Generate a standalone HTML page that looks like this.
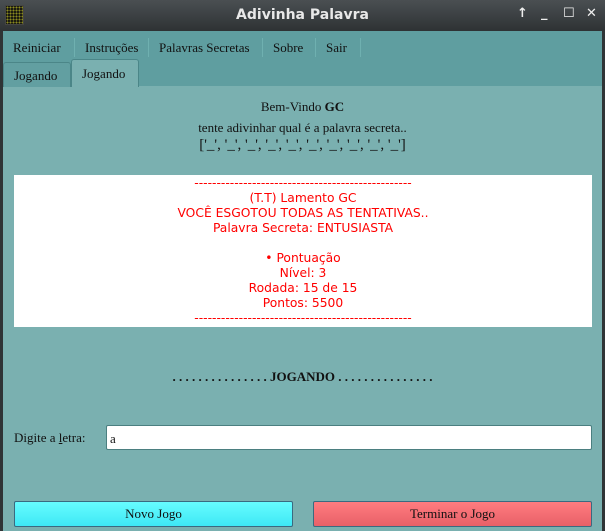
<!DOCTYPE html><html><head><style>
*{margin:0;padding:0;box-sizing:border-box}
body{width:605px;height:531px;overflow:hidden;background:#2f3436;position:relative;font-family:"Liberation Serif",serif;font-size:13px;color:#111}
.tb{position:absolute;left:0;top:0;width:605px;height:31px;background:linear-gradient(#4a4f52,#2e3234);}
.tb .t{position:absolute;left:0;right:0;top:7px;text-align:center;color:#e8e8e8;font:bold 14px "DejaVu Sans",sans-serif}
.icon{position:absolute;left:5px;top:5px;width:19px;height:20px;background:#1a1a10;border:1px solid #444;background-image:radial-gradient(#8a8a20 1px,transparent 1px);background-size:3px 3px}
.ctl{position:absolute;top:6px;color:#eee;font:bold 13px "DejaVu Sans",sans-serif}
.win{position:absolute;left:3px;top:31px;width:599px;height:500px;background:#7ab0b0}
.menu{position:absolute;left:0;top:0;width:599px;height:55px;background:#5f9ea0}
.mi{position:absolute;top:9px;font-size:13px}
.sep{position:absolute;top:7px;width:1px;height:19px;background:#6fb0b0}
.tab{position:absolute;top:30px;height:26px;border:1px solid #4b8688;border-bottom:none;border-radius:3px 3px 0 0;padding:5px 0 0 10px}
.c{text-align:center;position:absolute;left:0;width:599px}
.box{position:absolute;left:11px;top:144px;width:578px;height:152px;background:#fff;color:#f00;font-family:"DejaVu Sans",sans-serif;font-size:12.3px;text-align:center;line-height:15px;padding-top:1px}
.inp{position:absolute;left:103px;top:394px;width:486px;height:25px;background:#fff;border:1px solid #4b7f80;border-radius:2px;padding:5px 0 0 3px}
.btn{position:absolute;top:470px;width:279px;height:26px;border:1px solid #3a6a80;border-radius:2px;text-align:center;padding-top:4px}
</style></head><body>
<div class="tb"><div class="icon"></div><div class="t">Adivinha Palavra</div>
<span class="ctl" style="left:517px">↑</span><span class="ctl" style="left:541px">_</span><span class="ctl" style="left:563px">☐</span><span class="ctl" style="left:586px">✕</span></div>
<div class="win">
<div class="menu">
<span class="mi" style="left:10px">Reiniciar</span><div class="sep" style="left:71px"></div>
<span class="mi" style="left:82px">Instruções</span><div class="sep" style="left:145px"></div>
<span class="mi" style="left:156px">Palavras Secretas</span><div class="sep" style="left:259px"></div>
<span class="mi" style="left:270px">Sobre</span><div class="sep" style="left:312px"></div>
<span class="mi" style="left:323px">Sair</span><div class="sep" style="left:357px"></div>
<div class="tab" style="left:0;width:68px;top:31px;height:25px;background:#629fa1">Jogando</div>
<div class="tab" style="left:68px;width:68px;background:#7ab0b0;top:28px;height:28px;padding-top:6px">Jogando</div>
</div>
<div class="c" style="top:68px">Bem-Vindo <b>GC</b></div>
<div class="c" style="top:89px">tente adivinhar qual é a palavra secreta..</div>
<div class="c" style="top:106px;font-size:15px">['_', '_', '_', '_', '_', '_', '_', '_', '_', '_']</div>
<div class="box">-------------------------------------------------<br>(T.T) Lamento GC<br>VOCÊ ESGOTOU TODAS AS TENTATIVAS..<br>Palavra Secreta: ENTUSIASTA<br><br>• Pontuação<br>Nível: 3<br>Rodada: 15 de 15<br>Pontos: 5500<br>-------------------------------------------------</div>
<div class="c" style="top:338px;font-weight:bold">. . . . . . . . . . . . . . . JOGANDO . . . . . . . . . . . . . . .</div>
<div style="position:absolute;left:11px;top:399px">Digite a <u>l</u>etra:</div>
<div class="inp">a</div>
<div class="btn" style="left:11px;background:linear-gradient(#66fcff,#3ee8f5)">Novo Jogo</div>
<div class="btn" style="left:310px;background:linear-gradient(#ff7c80,#e86068)">Terminar o Jogo</div>
</div>
</body></html>
